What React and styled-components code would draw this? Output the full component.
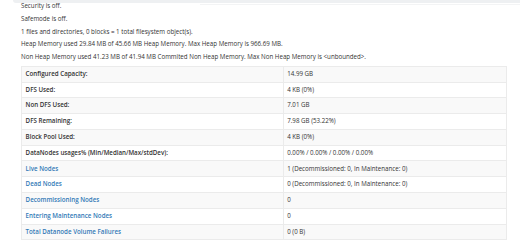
import React from "react";
import styled, { createGlobalStyle } from "styled-components";

const GlobalStyle = createGlobalStyle`
  html, body {
    margin: 0;
    padding: 0;
    background: #fff;
  }
  body {
    font-family: "Open Sans", "Liberation Sans", sans-serif;
    color: #333;
  }
`;

const Page = styled.div`
  width: 520px;
  height: 242px;
  overflow: hidden;
`;

// bottom edge of the navbar, scrolled almost out of view
const TopBar = styled.div`
  margin-left: 13px;
  height: 3px;
  background: #eef0f2;
  border-bottom-left-radius: 3px;
`;

const TopRule = styled.div`
  margin-left: 200px;
  margin-top: 1px;
  height: 1px;
  background: #f3f4f5;
`;

const Content = styled.div`
  padding: 0 13px 0 21px;
  margin-top: -3px;
`;

const Line = styled.p`
  margin: 0 0 4.25px;
  font-size: 6.2px;
  line-height: 8.5px;
  white-space: nowrap;
`;

const Table = styled.table`
  width: 100%;
  border-collapse: collapse;
  border: 1px solid #ebebeb;
  font-size: 6.2px;
  line-height: 8.5px;
`;

const Row = styled.tr`
  background: ${(p) => (p.$striped ? "#f9f9f9" : "#fff")};
`;

const Label = styled.th`
  width: 254px;
  padding: 3.15px 3.6px;
  text-align: left;
  font-weight: 600;
  color: ${(p) => (p.$link ? "#337ab7" : "#333")};
  border: 1px solid #ebebeb;
  white-space: nowrap;
`;

const Value = styled.td`
  padding: 3.15px 3px;
  border: 1px solid #ebebeb;
  white-space: nowrap;
`;

const rows = [
  ["Configured Capacity:", "14.99 GB"],
  ["DFS Used:", "4 KB (0%)"],
  ["Non DFS Used:", "7.01 GB"],
  ["DFS Remaining:", "7.98 GB (53.22%)"],
  ["Block Pool Used:", "4 KB (0%)"],
  ["DataNodes usages% (Min/Median/Max/stdDev):", "0.00% / 0.00% / 0.00% / 0.00%"],
  ["Live Nodes", "1 (Decommissioned: 0, In Maintenance: 0)", true],
  ["Dead Nodes", "0 (Decommissioned: 0, In Maintenance: 0)", true],
  ["Decommissioning Nodes", "0", true],
  ["Entering Maintenance Nodes", "0", true],
  ["Total Datanode Volume Failures", "0 (0 B)", true],
];

export default function App() {
  return (
    <Page>
      <GlobalStyle />
      <TopBar />
      <TopRule />
      <Content>
        <Line>Security is off.</Line>
        <Line>Safemode is off.</Line>
        <Line>1 files and directories, 0 blocks = 1 total filesystem object(s).</Line>
        <Line>Heap Memory used 29.84 MB of 45.66 MB Heap Memory. Max Heap Memory is 966.69 MB.</Line>
        <Line>
          Non Heap Memory used 41.23 MB of 41.94 MB Commited Non Heap Memory. Max Non Heap Memory is
          &lt;unbounded&gt;.
        </Line>
        <Table>
          <tbody>
            {rows.map(([label, value, link], i) => (
              <Row key={label} $striped={i % 2 === 0}>
                <Label $link={link}>{label}</Label>
                <Value>{value}</Value>
              </Row>
            ))}
          </tbody>
        </Table>
      </Content>
    </Page>
  );
}
